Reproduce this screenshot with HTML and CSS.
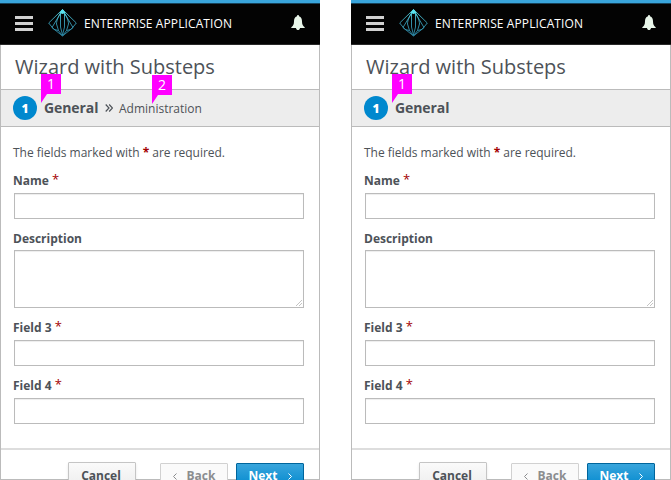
FILE: index.html
```html
<!DOCTYPE html>
<html lang="en">
<head>
<meta charset="utf-8">
<title>Wizard with Substeps</title>
<link rel="stylesheet" href="styles.css">
</head>
<body>
<svg class="defs" width="0" height="0" aria-hidden="true">
  <defs>
    <linearGradient id="teal" gradientUnits="userSpaceOnUse" x1="0" y1="0" x2="0" y2="28"><stop offset="0" stop-color="#59e1ed"/><stop offset=".45" stop-color="#3a9fb9"/><stop offset="1" stop-color="#2b87a6"/></linearGradient>
    <symbol id="logo" viewBox="0 0 30 28">
      <g fill="none" stroke="url(#teal)" stroke-width=".9">
        <path d="M14.500 .5L.7 14L6 20.500L10.500 21.500L14.500 27L18.500 21.500L23 20.500L28.300 14Z"/>
        <path d="M14.500 1L4 18.500L14.500 27L25 18.500Z"/>
        <path d="M14.500 1C11 6 8.500 11 8.500 15L10.500 21.500M14.500 1C18 6 20.500 11 20.500 15L18.500 21.500"/>
        <path d="M12.500 5V18L14.500 26L16.500 18V5"/>
      </g>
      <path d="M11.500 4L14.500 0L17.500 4L14.500 5Z" fill="#59e1ed"/>
    </symbol>
    <symbol id="bell" viewBox="0 0 14 15">
      <path d="M7 0C7.800 0 8 .6 8 1.300C10.300 2 11 4 11 6.500C11 9.700 12 11 13.700 12.300V13H9C8.800 14.500 7.900 15 7 15S5.200 14.500 5 13H.3V12.300C2 11 3 9.700 3 6.500C3 4 3.700 2 6 1.300C6 .6 6.200 0 7 0Z" fill="#e9f6ea"/>
    </symbol>
  </defs>
</svg>
<main class="screens">
  <section class="screen">
    <header class="masthead">
      <div class="menu"><i></i><i></i><i></i></div>
      <svg class="logo"><use href="#logo"/></svg>
      <span class="brand">ENTERPRISE APPLICATION</span>
      <svg class="bell"><use href="#bell"/></svg>
    </header>
    <div class="wizard">
      <h1><span>Wizard with Substeps</span></h1>
      <nav class="steps">
        <span class="number">1</span>
        <span class="current">General</span>
        <svg class="chevrons" viewBox="0 0 8 8"><path d="M.7.500L4 4L.7 7.500M4.200.500L7.500 4L4.200 7.500"/></svg>
        <span class="next-step">Administration</span>
      </nav>
      <form class="form">
        <p>The fields marked with <b>*</b> are required.</p>
        <label>Name <b>*</b></label>
        <div class="input name"></div>
        <label>Description</label>
        <div class="input area"><svg viewBox="0 0 6 6"><path d="M0 6L6 0M3 6L6 3"/></svg></div>
        <label>Field 3 <b>*</b></label>
        <div class="input"></div>
        <label>Field 4 <b>*</b></label>
        <div class="input"></div>
      </form>
      <footer class="actions">
        <span class="btn cancel">Cancel</span>
        <span class="btn back"><svg viewBox="0 0 4 7"><path d="M3.500.500L.5 3.500L3.500 6.500"/></svg><span>Back</span></span>
        <span class="btn next"><span>Next</span><svg viewBox="0 0 4 7"><path d="M.5.500L3.500 3.500L.5 6.500"/></svg></span>
      </footer>
    </div>
    <span class="marker first">1</span>
    <span class="marker second">2</span>
  </section>
  <section class="screen">
    <header class="masthead">
      <div class="menu"><i></i><i></i><i></i></div>
      <svg class="logo"><use href="#logo"/></svg>
      <span class="brand">ENTERPRISE APPLICATION</span>
      <svg class="bell"><use href="#bell"/></svg>
    </header>
    <div class="wizard">
      <h1><span>Wizard with Substeps</span></h1>
      <nav class="steps">
        <span class="number">1</span>
        <span class="current">General</span>
      </nav>
      <form class="form">
        <p>The fields marked with <b>*</b> are required.</p>
        <label>Name <b>*</b></label>
        <div class="input name"></div>
        <label>Description</label>
        <div class="input area"><svg viewBox="0 0 6 6"><path d="M0 6L6 0M3 6L6 3"/></svg></div>
        <label>Field 3 <b>*</b></label>
        <div class="input"></div>
        <label>Field 4 <b>*</b></label>
        <div class="input"></div>
      </form>
      <footer class="actions">
        <span class="btn cancel">Cancel</span>
        <span class="btn back"><svg viewBox="0 0 4 7"><path d="M3.500.500L.5 3.500L3.500 6.500"/></svg><span>Back</span></span>
        <span class="btn next"><span>Next</span><svg viewBox="0 0 4 7"><path d="M.5.500L3.500 3.500L.5 6.500"/></svg></span>
      </footer>
    </div>
    <span class="marker first">1</span>
  </section>
</main>
</body>
</html>
```
FILE: styles.css
```css
* { box-sizing: border-box; }
body { margin: 0; background: #fff; color: #4d5258; font: 12px/18px "Open Sans", "Noto Sans", sans-serif; overflow: hidden; }
.defs { position: absolute; }
.screens { display: flex; gap: 31px; height: 480px; overflow: hidden; }
.screen { position: relative; flex: 0 0 320px; height: 480px; overflow: hidden; }
.masthead { display: flex; align-items: flex-start; height: 45px; background: #030303; border-top: 3px solid #39a5dc; border-bottom: 1px solid #292929; box-shadow: inset 0 1px #174259; }
.menu { display: grid; gap: 3px; margin: 13px 0 0 15px; width: 18px; }
.menu i { height: 3px; background: #d1d1d1; }
.logo { width: 30px; height: 28px; margin: 6px 0 0 15px; }
.brand { margin: 12px 0 0 6px; color: #fff; font-size: 12px; letter-spacing: .1px; white-space: nowrap; }
.bell { width: 14px; height: 15px; margin: 12px 15.500px 0 auto; }
.wizard { height: 435px; border: 1px solid #bbb; border-top: 0; }
h1 { margin: 0; height: 45px; padding: 8px 0 0 14px; border-bottom: 1px solid #bbb; font-size: 20px; line-height: 28px; font-weight: 400; white-space: nowrap; }
.steps { display: flex; align-items: center; height: 37px; padding-left: 12px; background: #ededed; border-bottom: 1px solid #bbb; }
.number { width: 24px; height: 24px; border-radius: 50%; background: #0088ce; color: #fff; font-weight: 800; line-height: 25px; text-align: center; }
.current { margin-left: 7px; width: 55px; font-size: 14px; font-weight: 700; letter-spacing: -.08px; white-space: nowrap; }
.chevrons { width: 8px; height: 8px; margin-left: 6px; fill: none; stroke: #4d5258; stroke-width: 1.2; }
.next-step { margin: 1px 0 0 6px; }
.form { height: 321px; padding: 17px 15px 0 12px; }
.form p { margin: 0 0 9px; height: 18px; letter-spacing: -.02px; }
.form b { color: #a30000; font-weight: 700; }
.form label { display: block; height: 18px; font-weight: 700; }
.form label b { display: inline-block; font-size: 13px; font-weight: 400; transform: translateY(-1px); }
.input { height: 26px; margin: 4px 0 10px 1px; border: 1px solid #bbb; box-shadow: inset 0 1px 1px rgba(0,0,0,.075); }
.input.name { margin-bottom: 11px; }
.input.area { height: 58px; margin-top: 2px; display: flex; justify-content: flex-end; align-items: flex-end; }
.area svg { width: 6px; height: 6px; margin: 0 1px 1px 0; stroke: #aaa; stroke-width: .7; }
.actions { display: flex; align-items: flex-start; height: 40px; padding: 13px 15px 0 0; justify-content: flex-end; border-top: 2px solid #ddd; }
.btn { display: flex; align-items: center; justify-content: center; gap: 10px; width: 68px; height: 26px; border: 1px solid #bbb; border-radius: 1px; font-weight: 700; line-height: 24px; background: linear-gradient(#fafafa, #ededed); }
.btn svg { width: 4px; height: 7px; fill: none; stroke: currentColor; stroke-width: 1; }
.cancel { height: 27px; margin-top: -1px; margin-right: 24px; padding-right: 2px; border-color: #c5c5c5; box-shadow: 0 2px 3px rgba(3,3,3,.1); }
.back { margin-right: 8px; background: #fafafa; border-color: #d1d1d1; color: #8b8d8f; }
.next { background: linear-gradient(#39a5dc, #0088ce); border-color: #00659c; color: #fff; }
.marker { position: absolute; top: 74px; left: 41px; width: 20px; height: 29px; background: #f0f; color: #fff; clip-path: polygon(0 0, 100% 0, 100% 20px, 6px 20px, 0 100%); font-size: 14px; font-weight: 500; line-height: 20px; text-align: center; }
.marker.second { top: 75px; left: 152px; }
```
